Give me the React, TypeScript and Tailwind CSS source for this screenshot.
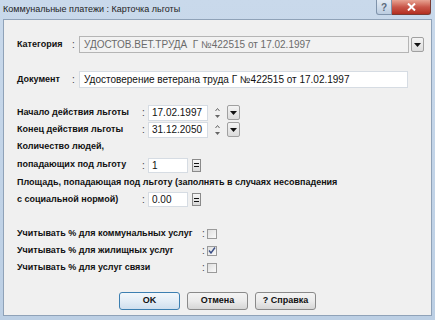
import React from "react";

const font = { fontFamily: '"Liberation Sans", Arial, sans-serif' };

function DropButton() {
  return (
    <div className="w-[13px] h-[15px] border border-[#a0a0a0] rounded-[2px] bg-gradient-to-b from-[#f4f4f4] to-[#dcdcdc] flex items-center justify-center">
      <svg width="7" height="4" viewBox="0 0 7 4">
        <path d="M0 0 H7 L3.5 4 Z" fill="#111" />
      </svg>
    </div>
  );
}

function Spinner() {
  return (
    <div className="w-[19px] flex flex-col items-center justify-center gap-[4px]">
      <svg width="5" height="3" viewBox="0 0 5 3">
        <path d="M0.5 3 L2.5 0.5 L4.5 3" stroke="#666" strokeWidth="1" fill="none" />
      </svg>
      <svg width="5" height="3" viewBox="0 0 5 3">
        <path d="M0 0 H5 L2.5 3 Z" fill="#666" />
      </svg>
    </div>
  );
}

function EqButton() {
  return (
    <div className="w-[9px] h-[13px] border border-[#8a8a8a] bg-gradient-to-b from-[#f6f6f6] to-[#d8d8d8] flex flex-col items-center justify-center gap-[2px]">
      <div className="w-[5px] h-[1px] bg-[#111]" />
      <div className="w-[5px] h-[1px] bg-[#111]" />
    </div>
  );
}

function Check({ checked }: { checked?: boolean }) {
  return (
    <div className="w-[10px] h-[10px] border border-[#9a9a9a] bg-gradient-to-br from-[#dedede] to-[#fafafa] flex items-center justify-center">
      {checked && (
        <svg width="8" height="7" viewBox="0 0 8 7">
          <path d="M1 3.5 L3 6 L7 0.5" stroke="#3b4f86" strokeWidth="1.4" fill="none" />
        </svg>
      )}
    </div>
  );
}

function Label({ children, w }: { children: React.ReactNode; w: string }) {
  return <div className={`${w} text-[9px] font-bold text-[#111] whitespace-nowrap`}>{children}</div>;
}

function Colon() {
  return <div className="w-[7px] text-[10px] text-[#444] text-center">:</div>;
}

export default function App() {
  const checks = [
    { label: "Учитывать % для коммунальных услуг", checked: false },
    { label: "Учитывать % для жилищных услуг", checked: true },
    { label: "Учитывать % для услуг связи", checked: false },
  ];

  return (
    <div style={font} className="w-[435px] h-[320px] overflow-hidden flex flex-col bg-gradient-to-b from-[#c9d9eb] to-[#bccfe4]">
      {/* title bar */}
      <div className="h-[19px] flex items-start shrink-0">
        <div className="pl-[3px] pt-[3px] text-[9px] text-[#1e1e1e] whitespace-nowrap">
          Коммунальные платежи : Карточка льготы
        </div>
        <div className="ml-auto mr-[4px] flex">
          <div className="w-[16px] h-[15px] border border-[#7f93ab] border-t-0 rounded-bl-[3px] bg-gradient-to-b from-[#e3ebf4] to-[#bccde1] flex items-center justify-center text-[10px] font-bold text-[#5b6a7c]">
            ?
          </div>
          <div className="w-[39px] h-[15px] border border-[#7a3b33] border-t-0 border-l-0 rounded-br-[3px] bg-gradient-to-b from-[#e7a393] via-[#c9574a] to-[#b32d1f] flex items-center justify-center">
            <svg width="9" height="8" viewBox="0 0 9 8">
              <path d="M1 0.5 L8 7.5 M8 0.5 L1 7.5" stroke="#fff" strokeWidth="2" />
            </svg>
          </div>
        </div>
      </div>

      {/* client area */}
      <div className="mx-[3px] h-[297px] shrink-0 bg-[#f0f0f0] border border-[#8fa2b8] flex flex-col pl-[13px]">
        {/* Категория */}
        <div className="mt-[16px] h-[17px] flex items-center">
          <Label w="w-[53px]">Категория</Label>
          <Colon />
          <div className="ml-[2px] w-[330px] h-[17px] border border-[#b5b5b5] bg-[#f2f2f2] flex items-center pl-[4px] text-[10px] text-[#6b6b6b] whitespace-nowrap">
            УДОСТОВ.ВЕТ.ТРУДА&nbsp;&nbsp;Г №422515 от 17.02.1997
          </div>
          <div className="ml-[2px]">
            <DropButton />
          </div>
        </div>

        {/* Документ */}
        <div className="mt-[18px] h-[17px] flex items-center">
          <Label w="w-[53px]">Документ</Label>
          <Colon />
          <div className="ml-[2px] w-[329px] h-[17px] border border-[#d6dce3] bg-white flex items-center pl-[4px] text-[10px] text-[#111] whitespace-nowrap">
            Удостоверение ветерана труда Г №422515 от 17.02.1997
          </div>
        </div>

        {/* dates */}
        <div className="mt-[16px] h-[17px] flex items-center">
          <Label w="w-[123px]">Начало действия льготы</Label>
          <Colon />
          <div className="ml-[1px] w-[60px] h-[16px] border border-[#d6dce3] bg-white flex items-center pl-[3px] text-[10px] text-[#111]">
            17.02.1997
          </div>
          <Spinner />
          <DropButton />
        </div>
        <div className="h-[17px] flex items-center">
          <Label w="w-[123px]">Конец действия льготы</Label>
          <Colon />
          <div className="ml-[1px] w-[60px] h-[16px] border border-[#d6dce3] bg-white flex items-center pl-[3px] text-[10px] text-[#111]">
            31.12.2050
          </div>
          <Spinner />
          <DropButton />
        </div>

        <div className="h-[18px] flex items-center">
          <Label w="w-auto">Количество людей,</Label>
        </div>
        <div className="h-[18px] flex items-center">
          <Label w="w-[123px]">попадающих под льготу</Label>
          <Colon />
          <div className="ml-[1px] w-[40px] h-[15px] border border-[#d6dce3] bg-white flex items-center pl-[3px] text-[10px] text-[#111]">
            1
          </div>
          <div className="ml-[4px]">
            <EqButton />
          </div>
        </div>
        <div className="h-[17px] flex items-center">
          <Label w="w-auto">Площадь, попадающая под льготу (заполнять в случаях несовпадения</Label>
        </div>
        <div className="h-[17px] flex items-center">
          <Label w="w-[123px]">с социальной нормой)</Label>
          <Colon />
          <div className="ml-[1px] w-[40px] h-[15px] border border-[#d6dce3] bg-white flex items-center pl-[3px] text-[10px] text-[#111]">
            0.00
          </div>
          <div className="ml-[4px]">
            <EqButton />
          </div>
        </div>

        {/* checkboxes */}
        <div className="mt-[17px] flex flex-col">
          {checks.map((c) => (
            <div key={c.label} className="h-[17px] flex items-center">
              <Label w="w-[183px]">{c.label}</Label>
              <Colon />
              <Check checked={c.checked} />
            </div>
          ))}
        </div>

        {/* buttons */}
        <div className="mt-[16px] -ml-[13px] flex justify-center gap-[7px]">
          <button className="w-[61px] h-[18px] rounded-[3px] border border-[#3c7fb1] bg-gradient-to-b from-[#f2f7fb] via-[#e3edf6] to-[#cfdfee] text-[9px] font-bold text-[#111]">
            OK
          </button>
          <button className="w-[61px] h-[18px] rounded-[3px] border border-[#8a8a8a] bg-gradient-to-b from-[#f4f4f4] via-[#ebebeb] to-[#d6d6d6] text-[9px] font-bold text-[#111]">
            Отмена
          </button>
          <button className="w-[61px] h-[18px] rounded-[3px] border border-[#8a8a8a] bg-gradient-to-b from-[#f4f4f4] via-[#ebebeb] to-[#d6d6d6] text-[9px] font-bold text-[#111]">
            ? Справка
          </button>
        </div>
      </div>
    </div>
  );
}
